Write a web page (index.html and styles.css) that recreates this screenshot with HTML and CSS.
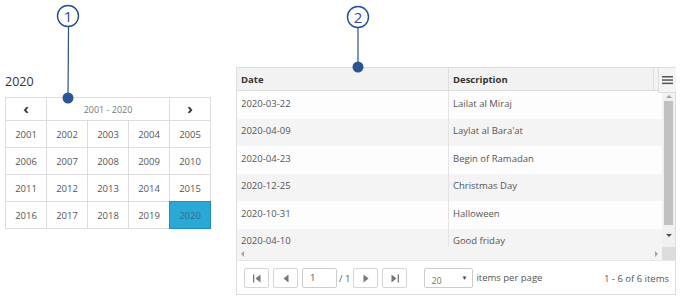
FILE: index.html
```html
<!DOCTYPE html>
<html lang="en">
  <head>
    <meta charset="UTF-8" />
    <title>Calendar and Grid</title>
    <link rel="stylesheet" href="styles.css">
  </head>
  <body>
    <div class="page">
      <div class="calendar-panel">
        <div class="cal-title">2020</div>
        <div class="calendar">
          <div class="cal-head cal-nav">&#8249;</div>
          <div class="cal-head cal-range">2001 - 2020</div>
          <div class="cal-head cal-nav">&#8250;</div>
          <div class="cal-cell">2001</div>
          <div class="cal-cell">2002</div>
          <div class="cal-cell">2003</div>
          <div class="cal-cell">2004</div>
          <div class="cal-cell">2005</div>
          <div class="cal-cell">2006</div>
          <div class="cal-cell">2007</div>
          <div class="cal-cell">2008</div>
          <div class="cal-cell">2009</div>
          <div class="cal-cell">2010</div>
          <div class="cal-cell">2011</div>
          <div class="cal-cell">2012</div>
          <div class="cal-cell">2013</div>
          <div class="cal-cell">2014</div>
          <div class="cal-cell">2015</div>
          <div class="cal-cell">2016</div>
          <div class="cal-cell">2017</div>
          <div class="cal-cell">2018</div>
          <div class="cal-cell">2019</div>
          <div class="cal-cell selected">2020</div>
        </div>
      </div>

      <div class="grid">
        <div class="grid-header">
          <div class="col-date">Date</div>
          <div class="col-desc">Description</div>
          <div class="menu-btn">
            <svg width="11" height="10" viewBox="0 0 11 10">
              <rect x="0" y="1" width="11" height="1.5" fill="#555"></rect>
              <rect x="0" y="4.3" width="11" height="1.5" fill="#555"></rect>
              <rect x="0" y="7.6" width="11" height="1.5" fill="#555"></rect>
            </svg>
          </div>
        </div>

        <div class="grid-body">
          <div class="rows">
            <div class="row"><div class="col-date">2020-03-22</div><div class="col-desc">Lailat al Miraj</div></div>
            <div class="row alt"><div class="col-date">2020-04-09</div><div class="col-desc">Laylat al Bara'at</div></div>
            <div class="row"><div class="col-date">2020-04-23</div><div class="col-desc">Begin of Ramadan</div></div>
            <div class="row alt"><div class="col-date">2020-12-25</div><div class="col-desc">Christmas Day</div></div>
            <div class="row"><div class="col-date">2020-10-31</div><div class="col-desc">Halloween</div></div>
            <div class="row alt"><div class="col-date">2020-04-10</div><div class="col-desc">Good friday</div></div>
          </div>
          <div class="vscroll">
            <div class="arrow arrow-up"></div>
            <div class="vthumb"></div>
            <div class="arrow arrow-down"></div>
          </div>
        </div>

        <div class="hscroll">
          <div class="htrack">
            <div class="arrow arrow-left"></div>
            <div class="arrow arrow-right"></div>
          </div>
          <div class="corner"></div>
        </div>

        <div class="pager">
          <button class="pg-btn">
            <svg width="10" height="9" viewBox="0 0 10 9"><rect x="1" y="0.5" width="1.3" height="8" fill="#777"></rect><path d="M8.5 0.5 L3.5 4.5 L8.5 8.5 Z" fill="#777"></path></svg>
          </button>
          <button class="pg-btn">
            <svg width="10" height="9" viewBox="0 0 10 9"><path d="M7.5 0.5 L2.5 4.5 L7.5 8.5 Z" fill="#777"></path></svg>
          </button>
          <div class="pg-input">1</div>
          <span class="pg-total">/ 1</span>
          <button class="pg-btn">
            <svg width="10" height="9" viewBox="0 0 10 9"><path d="M2.5 0.5 L7.5 4.5 L2.5 8.5 Z" fill="#777"></path></svg>
          </button>
          <button class="pg-btn">
            <svg width="10" height="9" viewBox="0 0 10 9"><path d="M1.5 0.5 L6.5 4.5 L1.5 8.5 Z" fill="#777"></path><rect x="7.7" y="0.5" width="1.3" height="8" fill="#777"></rect></svg>
          </button>
          <div class="pg-select">
            <span class="pg-size">20</span>
            <span class="pg-caret">&#9660;</span>
          </div>
          <span class="pg-label">items per page</span>
          <span class="pg-info">1 - 6 of 6 items</span>
        </div>
      </div>

      <!-- numbered callouts drawn over the screenshot -->
      <svg class="callouts" width="680" height="303" viewBox="0 0 680 303">
        <line x1="68.5" y1="27" x2="68" y2="98" stroke="#2a4f8f" stroke-width="1.2"></line>
        <circle cx="68" cy="16" r="10.5" fill="#fff" stroke="#1f4e9b" stroke-width="1.4"></circle>
        <text x="68" y="21.5" text-anchor="middle" class="callout-num">1</text>
        <circle cx="68" cy="98" r="5.5" fill="#2c5597"></circle>

        <line x1="358" y1="28" x2="358" y2="67" stroke="#2a4f8f" stroke-width="1.2"></line>
        <circle cx="358" cy="17" r="10.5" fill="#fff" stroke="#1f4e9b" stroke-width="1.4"></circle>
        <text x="358" y="22.5" text-anchor="middle" class="callout-num">2</text>
        <circle cx="358" cy="67" r="5.5" fill="#2c5597"></circle>
      </svg>
    </div>
  </body>
</html>
```

FILE: styles.css
```css
* {
  margin: 0;
  padding: 0;
  box-sizing: border-box;
}

body {
  background-color: #fff;
  font-family: "Open Sans", "Noto Sans", sans-serif;
  color: #555;
  font-size: 9.5px;
}

.page {
  position: relative;
  width: 680px;
  height: 303px;
  display: flex;
  align-items: flex-start;
  padding: 67px 0 0 5px;
}

/* year calendar */

.calendar-panel {
  width: 206px;
  margin-top: 5px;
}

.cal-title {
  font-size: 12.5px;
  color: #333;
  height: 25px;
  line-height: 20px;
}

.calendar {
  display: grid;
  grid-template-columns: repeat(5, 41px);
  border-left: 1px solid #ddd;
  border-top: 1px solid #ddd;
  width: 206px;
}

.cal-head,
.cal-cell {
  border-right: 1px solid #ddd;
  border-bottom: 1px solid #ddd;
  display: flex;
  align-items: center;
  justify-content: center;
  background-color: #fff;
}

.cal-head {
  height: 23px;
}

.cal-nav {
  font-size: 15px;
  font-weight: 700;
  color: #333;
  padding-bottom: 2px;
}

.cal-range {
  grid-column: span 3;
  color: #777;
  font-size: 9px;
}

.cal-cell {
  height: 27px;
  font-size: 9.5px;
  color: #555;
}

.cal-cell.selected {
  background-color: #2aa9d6;
  border: 1px solid #1e8db7;
  color: #2d6f8e;
  margin: -1px 0 0 -1px;
  height: 28px;
  width: 42px;
}

/* data grid */

.grid {
  margin-left: 25px;
  width: 440px;
  border: 1px solid #ddd;
  background-color: #fff;
}

.grid-header {
  display: flex;
  height: 23px;
  background-color: #f2f2f2;
  border-bottom: 1px solid #ddd;
  font-weight: 700;
  color: #333;
}

.grid-header .col-date,
.grid-header .col-desc {
  display: flex;
  align-items: center;
}

.col-date {
  width: 212px;
  padding-left: 4px;
  border-right: 1px solid #ddd;
}

.col-desc {
  flex: 1;
  padding-left: 4px;
}

.grid-header .col-desc {
  border-right: 1px solid #ddd;
  margin-right: 4px;
}

.menu-btn {
  width: 18px;
  height: 25px;
  margin-right: -1px;
  background-color: #f4f4f4;
  border-left: 1px solid #ddd;
  border-bottom: 1px solid #ddd;
  display: flex;
  align-items: center;
  justify-content: center;
  position: relative;
  z-index: 1;
}

.grid-body {
  display: flex;
  height: 156px;
  overflow: hidden;
}

.rows {
  flex: 1;
}

.row {
  display: flex;
  height: 27.5px;
  align-items: center;
  background-color: #fdfdfd;
  padding-bottom: 3px;
}

.row.alt {
  background-color: #f4f4f4;
}

.row .col-date {
  height: calc(100% + 3px);
  margin-bottom: -3px;
  padding-bottom: 3px;
  display: flex;
  align-items: center;
  border-right-color: #e4e4e4;
}

.vscroll {
  width: 13px;
  background-color: #f1f1f1;
  display: flex;
  flex-direction: column;
  align-items: center;
  padding-top: 4px;
}

.vthumb {
  width: 9px;
  height: 124px;
  margin: 3px 0 9px;
  background-color: #c1c1c1;
}

.arrow {
  width: 0;
  height: 0;
}

.arrow-up {
  border-left: 3px solid transparent;
  border-right: 3px solid transparent;
  border-bottom: 3px solid #a3a3a3;
}

.arrow-down {
  border-left: 3px solid transparent;
  border-right: 3px solid transparent;
  border-top: 3px solid #505050;
}

.arrow-left {
  border-top: 3px solid transparent;
  border-bottom: 3px solid transparent;
  border-right: 3px solid #a3a3a3;
}

.arrow-right {
  border-top: 3px solid transparent;
  border-bottom: 3px solid transparent;
  border-left: 3px solid #a3a3a3;
}

.hscroll {
  display: flex;
  height: 13px;
}

.htrack {
  flex: 1;
  background-color: #f4f4f4;
  display: flex;
  align-items: center;
  justify-content: space-between;
  padding: 0 4px 0 4px;
}

.corner {
  width: 13px;
  background-color: #dcdcdc;
}

/* pager */

.pager {
  display: flex;
  align-items: center;
  height: 34px;
  padding: 1px 6px 0 7px;
  border-top: 1px solid #e8e8e8;
}

.pg-btn {
  width: 25px;
  height: 20px;
  border: 1px solid #d5d5d5;
  border-radius: 2px;
  background-color: #fff;
  display: flex;
  align-items: center;
  justify-content: center;
  margin-right: 4px;
}

.pg-input {
  width: 35px;
  height: 20px;
  border: 1px solid #ccc;
  border-radius: 2px;
  padding-left: 7px;
  line-height: 18px;
  color: #555;
}

.pg-total {
  margin: 0 3px 0 2px;
  color: #555;
}

.pg-select {
  width: 49px;
  height: 20px;
  border: 1px solid #ccc;
  border-radius: 2px;
  margin-left: 13px;
  display: flex;
  align-items: flex-end;
  justify-content: space-between;
  padding: 0 5px 0 6px;
}

.pg-size {
  font-size: 9px;
  color: #777;
  line-height: 12px;
  margin-bottom: 0;
}

.pg-caret {
  font-size: 6px;
  color: #444;
  align-self: center;
}

.pg-label {
  margin-left: 3px;
  padding-bottom: 2px;
}

.pg-info {
  margin-left: auto;
}

/* callouts */

.callouts {
  position: absolute;
  left: 0;
  top: 0;
  pointer-events: none;
}

.callout-num {
  font-family: "Open Sans", sans-serif;
  font-size: 15px;
  fill: #1f4e9b;
}
```
